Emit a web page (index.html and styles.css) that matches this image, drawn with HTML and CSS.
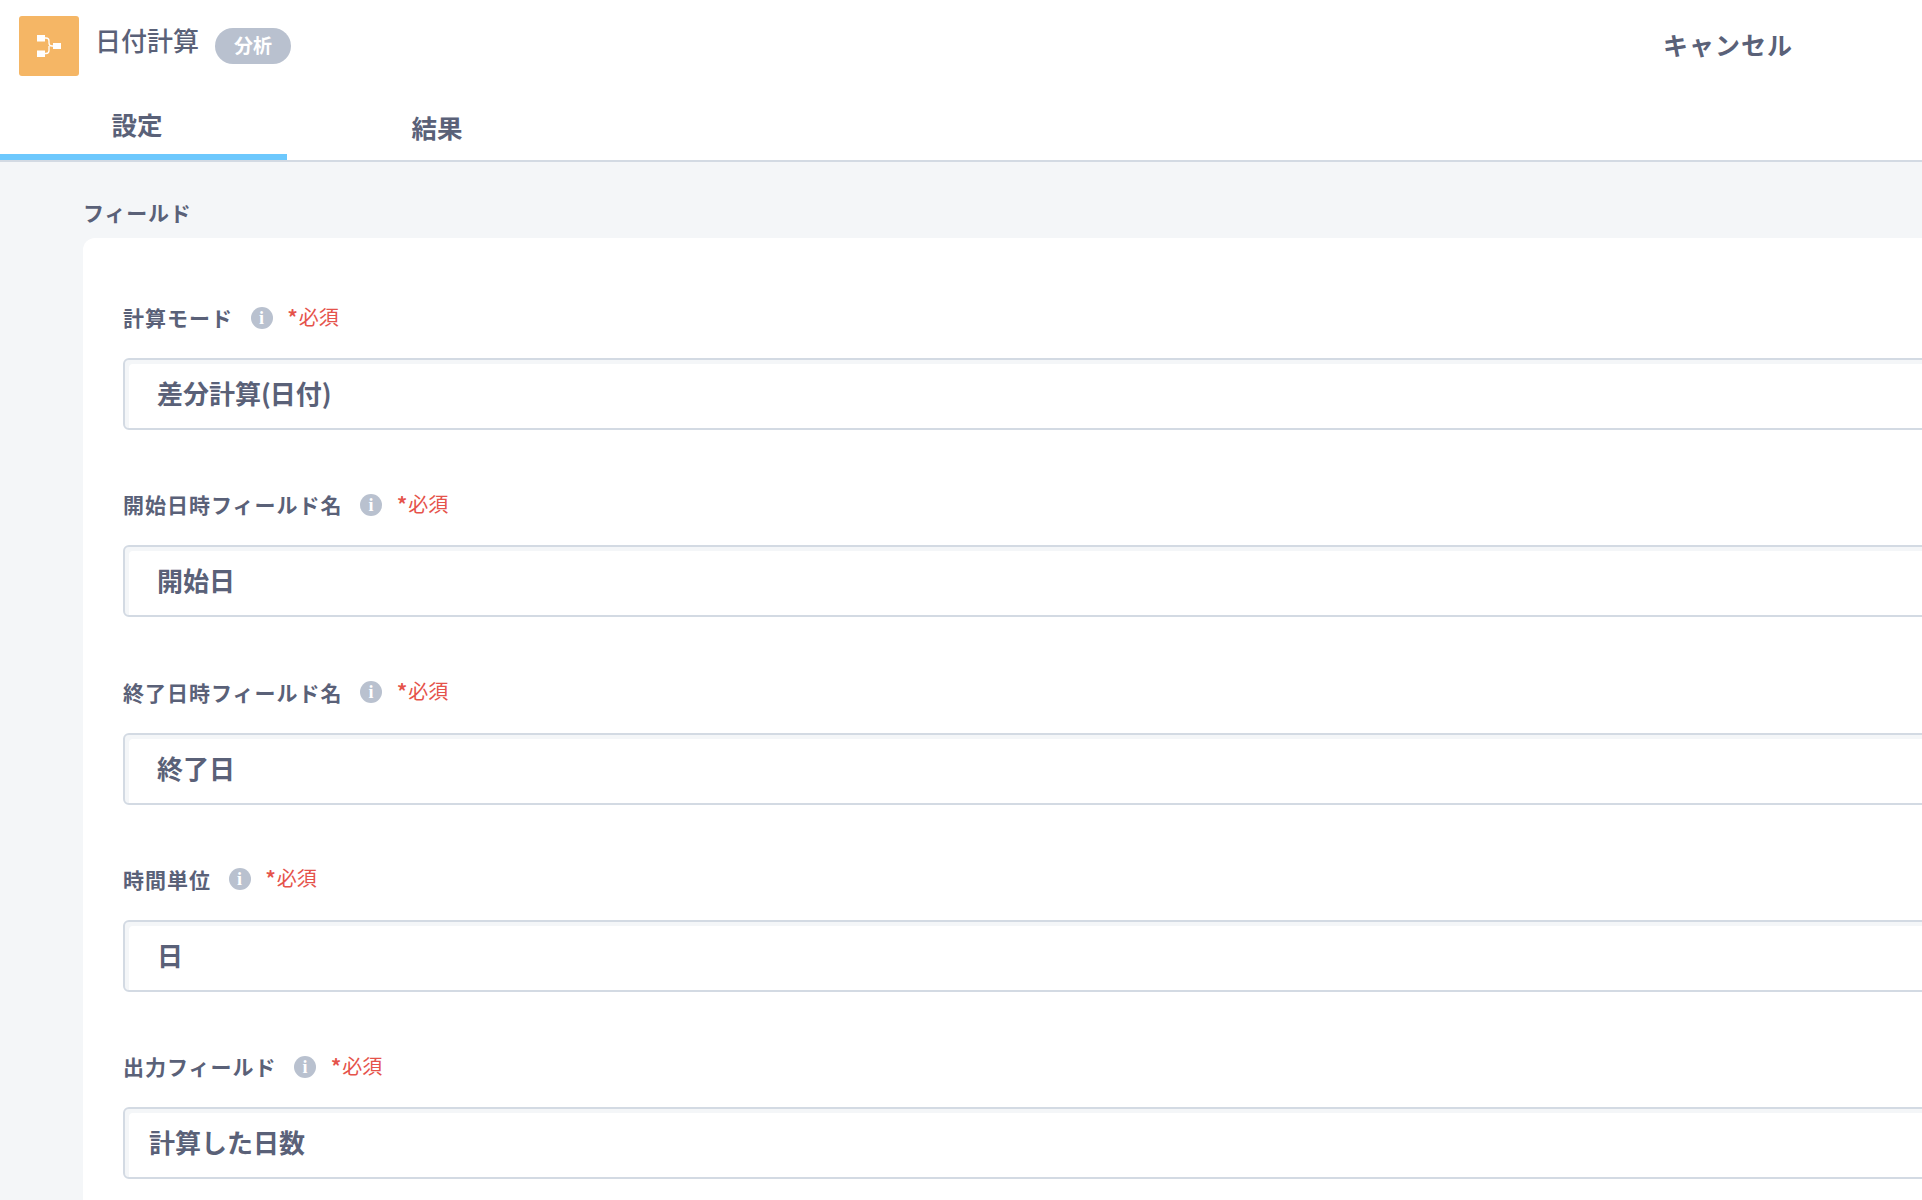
FILE: index.html
```html
<!DOCTYPE html>
<html lang="ja">
<head>
<meta charset="utf-8">
<title>日付計算</title>
<link rel="stylesheet" href="styles.css">
</head>
<body>
<div class="page">
  <header class="header">
    <div class="app-icon">
      <svg width="24" height="22" viewBox="0 0 24 22"><rect x="0" y="0" width="8" height="6.500" fill="#fff"/><rect x="0" y="15.500" width="8" height="6.500" fill="#fff"/><rect x="16" y="8" width="8" height="6" fill="#fff"/><path d="M8 3h1q3 0 3 3v2q0 3 3 3h1M8 18.500h1q3 0 3-3V11" fill="none" stroke="#fff" stroke-width="1.300"/></svg>
    </div>
    <div class="title">日付計算</div>
    <div class="badge">分析</div>
    <div class="cancel">キャンセル</div>
  </header>
  <nav class="tabs">
    <div class="tab tab-active">設定</div>
    <div class="tab tab-other">結果</div>
  </nav>
  <main class="body">
    <div class="section-title">フィールド</div>
    <section class="card">
      <div class="field">
        <div class="label-row"><span class="label">計算モード</span><span class="info">i</span><span class="req"><span class="star">*</span>必須</span></div>
        <div class="input">差分計算<span class="paren">(</span>日付<span class="paren">)</span></div>
      </div>
      <div class="field">
        <div class="label-row"><span class="label">開始日時フィールド名</span><span class="info">i</span><span class="req"><span class="star">*</span>必須</span></div>
        <div class="input">開始日</div>
      </div>
      <div class="field">
        <div class="label-row"><span class="label">終了日時フィールド名</span><span class="info">i</span><span class="req"><span class="star">*</span>必須</span></div>
        <div class="input">終了日</div>
      </div>
      <div class="field">
        <div class="label-row"><span class="label">時間単位</span><span class="info">i</span><span class="req"><span class="star">*</span>必須</span></div>
        <div class="input">日</div>
      </div>
      <div class="field">
        <div class="label-row"><span class="label">出力フィールド</span><span class="info">i</span><span class="req"><span class="star">*</span>必須</span></div>
        <div class="input input-tight">計算した日数</div>
      </div>
    </section>
  </main>
</div>
</body>
</html>
```
FILE: styles.css
```css
* { box-sizing: border-box; }
html, body { margin: 0; height: 100%; overflow: hidden; }
body { font-family: "Noto Sans CJK JP", "Noto Sans", sans-serif; color: #5a6178; background: #fff; }
.page { width: 1922px; height: 1200px; overflow: hidden; display: flex; flex-direction: column; }
.header { height: 92px; flex: none; display: flex; align-items: flex-start; padding: 16px 0 0 19px; }
.app-icon { width: 60px; height: 60px; border-radius: 3px; background: #f5b665; display: flex; align-items: center; justify-content: center; }
.title { font-size: 26px; line-height: 34px; font-weight: 500; margin: 7px 0 0 16px; }
.badge { margin: 12px 0 0 16px; width: 76px; height: 36px; border-radius: 18px; background: #b9c1cf; color: #fff; font-size: 19px; line-height: 34px; font-weight: 700; display: flex; align-items: flex-start; justify-content: center; }
.cancel { margin: 10px 0 0 auto; width: 259px; font-size: 25px; line-height: 36px; font-weight: 700; letter-spacing: 1px; }
.tabs { height: 70px; flex: none; display: flex; border-bottom: 2px solid #d3dae3; }
.tab { font-size: 25.500px; font-weight: 700; }
.tab-active { width: 287px; height: 68px; border-bottom: 6px solid #6dc8fd; text-align: center; line-height: 64px; padding-right: 13px; }
.tab-other { width: 300px; text-align: center; line-height: 70px; }
.body { flex: 1; background: #f4f6f8; padding: 35px 0 0 83px; }
.section-title { font-size: 21px; font-weight: 700; line-height: 30px; height: 41px; letter-spacing: 0.800px; }
.card { width: 1900px; height: 1000px; background: #fff; border-radius: 12px; padding: 63px 0 0 40px; display: flex; flex-direction: column; gap: 58.250px; }
.field { display: flex; flex-direction: column; gap: 25px; }
.label-row { display: flex; align-items: center; height: 32px; }
.label { font-size: 21px; font-weight: 700; letter-spacing: 1px; }
.info { width: 22px; height: 22px; margin-left: 17.500px; margin-top: 1px; border-radius: 50%; background: #b9c1cf; color: #fff; font-family: "Liberation Serif", serif; font-weight: 700; font-size: 18px; line-height: 22px; text-align: center; }
.req { margin-left: 15px; margin-top: -2px; font-size: 20px; color: #e5534b; }
.star { margin-right: 1px; font-weight: 700; }
.input { width: 1860px; height: 72px; border: 2px solid #d3dae3; border-radius: 6px; box-shadow: inset 4px 4px 0 #f4f6f8; font-size: 26px; font-weight: 700; line-height: 65px; padding-left: 32px; }
.paren { letter-spacing: -1.200px; }
.input-tight { padding-left: 24px; }
```
